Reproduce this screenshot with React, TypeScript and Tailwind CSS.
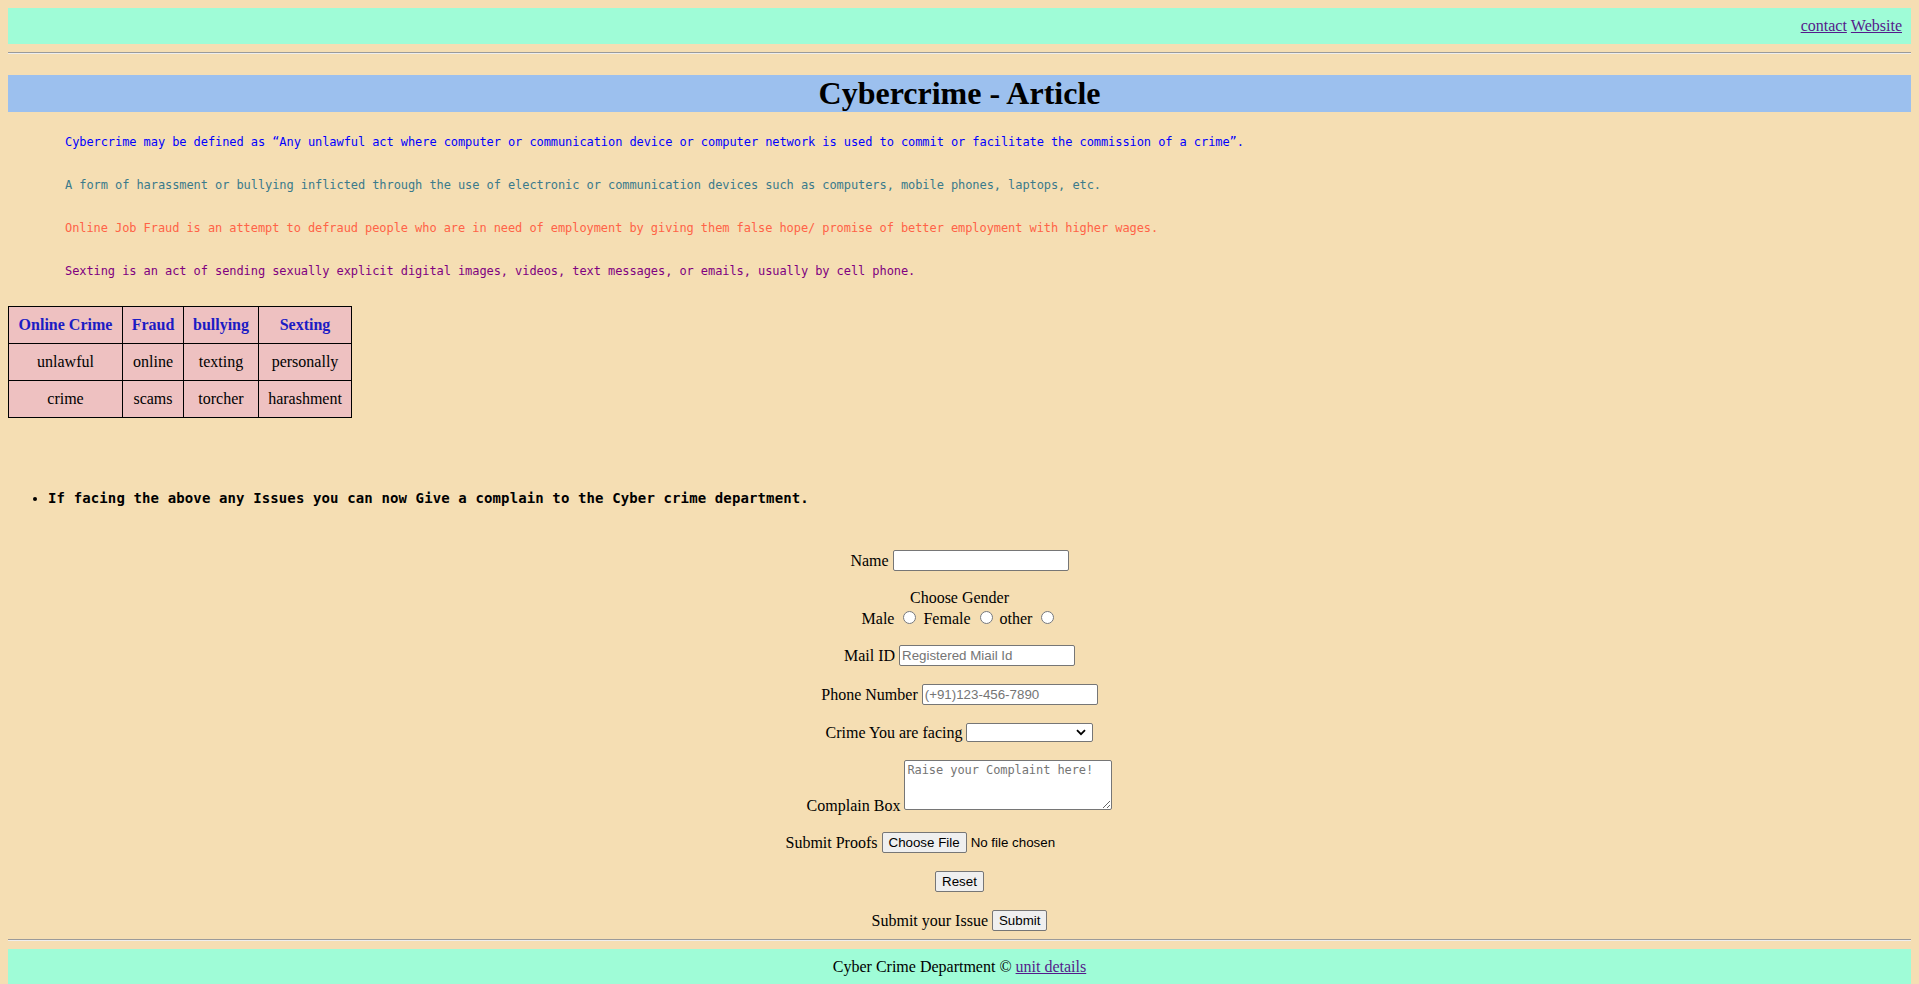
import React from "react";

const inputCls =
  "h-[21px] bg-white border border-[#767676] rounded-[2px] px-[2px] text-[13.33px] leading-[15px] font-['Liberation_Sans',Arial,sans-serif] text-black placeholder:text-[#757575] outline-none";
const btnCls =
  "inline-flex items-center justify-center h-[21px] bg-[#efefef] border border-[#767676] rounded-[2px] px-[6px] text-[13.33px] font-['Liberation_Sans',Arial,sans-serif] text-black leading-none";

export default function App() {
  return (
    <div className="min-h-screen bg-[#f5deb3] p-2 font-['Liberation_Serif','Times_New_Roman',serif] text-[16px] leading-[normal] text-black">
      {/* header */}
      <div className="h-[36px] bg-[#9ffcd7] flex items-center justify-end pr-[9px]">
        <a href="#" className="underline text-[#551a8b]">contact</a>
        <span>&nbsp;</span>
        <a href="#" className="underline text-[#551a8b]">Website</a>
      </div>
      <div className="mt-2 border-t border-t-[#9a9a9a] border-b border-b-[#eeeeee]" />

      <h1 className="mt-[21px] h-[37px] leading-[37px] bg-[#9cc0ee] text-center text-[32px] font-bold">
        Cybercrime - Article
      </h1>

      <div className="pl-[57px] pt-[23px] flex flex-col gap-[28px] font-['DejaVu_Sans_Mono',monospace] text-[12px] leading-[15px] tracking-[-0.08px] whitespace-nowrap">
        <div className="text-[#0000ff]">
          Cybercrime may be defined as “Any unlawful act where computer or communication device or computer network is used to commit or facilitate the commission of a crime”.
        </div>
        <div className="text-[#3a7a8b]">
          A form of harassment or bullying inflicted through the use of electronic or communication devices such as computers, mobile phones, laptops, etc.
        </div>
        <div className="text-[#ff6347]">
          Online Job Fraud is an attempt to defraud people who are in need of employment by giving them false hope/ promise of better employment with higher wages.
        </div>
        <div className="text-[#800080]">
          Sexting is an act of sending sexually explicit digital images, videos, text messages, or emails, usually by cell phone.
        </div>
      </div>

      <table className="mt-[27px] w-[343px] table-fixed border-collapse border border-black bg-[#eec1c1] text-center">
        <colgroup>
          <col className="w-[114px]" />
          <col className="w-[61px]" />
          <col className="w-[75px]" />
          <col className="w-[93px]" />
        </colgroup>
        <thead>
          <tr>
            {["Online Crime", "Fraud", "bullying", "Sexting"].map((h) => (
              <th key={h} className="border border-black px-0 py-[9px] leading-[18px] font-bold text-[#1c1cc4] whitespace-nowrap">
                {h}
              </th>
            ))}
          </tr>
        </thead>
        <tbody>
          {[
            ["unlawful", "online", "texting", "personally"],
            ["crime", "scams", "torcher", "harashment"],
          ].map((row, i) => (
            <tr key={i}>
              {row.map((c) => (
                <td key={c} className="border border-black px-0 py-[9px] leading-[18px] whitespace-nowrap">
                  {c}
                </td>
              ))}
            </tr>
          ))}
        </tbody>
      </table>

      <ul className="mt-[72px] pl-[40px] list-disc font-['DejaVu_Sans_Mono',monospace] text-[14px] leading-[17px] font-bold tracking-[0.12px]">
        <li>If facing the above any Issues you can now Give a complain to the Cyber crime department.</li>
      </ul>

      <form className="flex flex-col items-center" onSubmit={(e) => e.preventDefault()}>
        <div className="mt-[43px] h-[21px] flex items-center gap-[4px]">
          <span className="leading-[18px]">Name</span>
          <input type="text" className={`${inputCls} w-[176px]`} />
        </div>

        <div className="mt-[17px] text-center leading-[20px]">
          <div>Choose Gender</div>
          <div>
            Male <input type="radio" name="g" className="m-[3px_3px_0px_5px] align-baseline" /> Female{" "}
            <input type="radio" name="g" className="m-[3px_3px_0px_5px] align-baseline" /> other{" "}
            <input type="radio" name="g" className="m-[3px_3px_0px_5px] align-baseline" />
          </div>
        </div>

        <div className="mt-[16px] h-[21px] flex items-center gap-[4px]">
          <span className="leading-[18px]">Mail ID</span>
          <input type="text" placeholder="Registered Miail Id" className={`${inputCls} w-[176px]`} />
        </div>

        <div className="mt-[18px] h-[21px] flex items-center gap-[4px]">
          <span className="leading-[18px]">Phone Number</span>
          <input type="text" placeholder="(+91)123-456-7890" className={`${inputCls} w-[176px]`} />
        </div>

        <div className="mt-[18px] h-[19px] flex items-center gap-[4px]">
          <span className="leading-[18px]">Crime You are facing</span>
          <div className="relative w-[127px] h-[19px] bg-white border border-[#767676] rounded-[2px]">
            <svg className="absolute right-[6px] top-[5px]" width="10" height="7" viewBox="0 0 10 7">
              <path d="M1 1.2 L5 5.2 L9 1.2" fill="none" stroke="#000" strokeWidth="1.8" />
            </svg>
          </div>
        </div>

        <div className="mt-[18px] h-[50px] flex items-end gap-[4px]">
          <span className="leading-[18px] mb-[-5px]">Complain Box</span>
          <textarea
            placeholder="Raise your Complaint here!"
            className="w-[208px] h-[50px] bg-white border border-[#767676] rounded-[2px] p-[2px] font-['DejaVu_Sans_Mono',monospace] text-[12px] leading-[15px] tracking-[-0.08px] placeholder:text-[#757575] outline-none resize"
          />
        </div>

        <div className="mt-[22px] h-[21px] flex items-center gap-[4px]">
          <span className="leading-[18px]">Submit Proofs</span>
          <div className="w-[252px] flex items-center gap-[4px]">
            <span className={btnCls}>Choose File</span>
            <span className="text-[13.33px] leading-[15px] font-['Liberation_Sans',Arial,sans-serif]">No file chosen</span>
          </div>
        </div>

        <div className="mt-[18px] h-[21px]">
          <button type="button" className={btnCls}>Reset</button>
        </div>

        <div className="mt-[18px] h-[21px] flex items-center gap-[4px]">
          <span className="leading-[18px]">Submit your Issue</span>
          <button type="button" className={btnCls}>Submit</button>
        </div>
      </form>

      <div className="mt-2 border-t border-t-[#9a9a9a] border-b border-b-[#eeeeee]" />
      <div className="mt-2 h-[36px] bg-[#9ffcd7] flex items-center justify-center">
        <span>Cyber Crime Department ©&nbsp;</span>
        <a href="#" className="underline text-[#551a8b]">unit details</a>
      </div>
    </div>
  );
}
